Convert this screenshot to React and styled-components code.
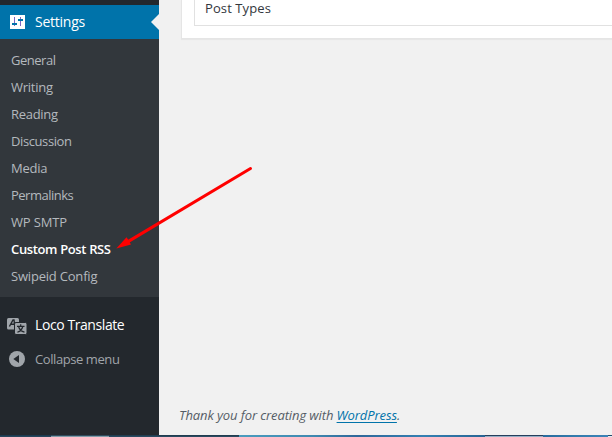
import React from "react";
import styled, { createGlobalStyle } from "styled-components";

const GlobalStyle = createGlobalStyle`
  * { box-sizing: border-box; }
  body { margin: 0; overflow: hidden; font-family: "Open Sans", "Noto Sans", sans-serif; }
`;

const Screen = styled.div`
  position: relative;
  width: 612px;
  height: 437px;
  display: flex;
  flex-direction: column;
  overflow: hidden;
  background: #f1f1f1;
`;

const Admin = styled.div`
  display: flex;
  height: 435px;
`;

const Sidebar = styled.nav`
  width: 159px;
  flex: none;
  padding-top: 5px;
  background: #23282d;
`;

const Label = styled.span`
  letter-spacing: ${(p) => p.$track || 0}px;
  white-space: nowrap;
`;

const MenuItem = styled.div`
  display: flex;
  align-items: center;
  height: 34px;
  color: ${(p) => p.$color || "#fff"};
  background: ${(p) => (p.$current ? "#0073aa" : "transparent")};
  font-size: ${(p) => p.$size || 14}px;
  line-height: 18px;

  &::after {
    content: "";
    display: ${(p) => (p.$current ? "block" : "none")};
    margin-left: auto;
    border: 8px solid transparent;
    border-right-color: #f1f1f1;
    border-left: 0;
  }
`;

const IconSlot = styled.span`
  display: flex;
  width: 35px;
  flex: none;
  height: 20px;
`;

const Submenu = styled.ul`
  margin: 0 0 11px;
  padding: 8px 0 7px 11px;
  height: 258px;
  list-style: none;
  background: #32373c;
`;

const SubItem = styled.li`
  height: 27px;
  font-size: 13px;
  line-height: 27px;
  font-weight: ${(p) => (p.$active ? 600 : 400)};
  color: ${(p) => (p.$active ? "#fff" : "#b4b9be")};
`;

const Content = styled.main`
  flex: 1;
  display: flex;
  flex-direction: column;
  justify-content: space-between;
  min-width: 0;
`;

const Card = styled.section`
  height: 39px;
  margin-left: 22px;
  padding-left: 12px;
  background: #fff;
  border: 1px solid #e5e5e5;
  border-width: 0 0 1px 1px;
  box-shadow: 0 1px 1px rgba(0, 0, 0, 0.04);
`;

const Field = styled.div`
  height: 26px;
  padding-left: 10px;
  border: 1px solid #e1e1e1;
  border-width: 0 0 1px 1px;
  color: #32373c;
  font-size: 13px;
  line-height: 17px;
`;

const Footer = styled.footer`
  padding: 0 0 10px 20px;
  color: #555d66;
  font-size: 13px;
  font-style: italic;
  line-height: 20px;
`;

const Link = styled.a`
  color: #0073aa;
  text-decoration: underline;
  text-underline-offset: 2px;
  text-decoration-thickness: 1px;
`;

const Taskbar = styled.div`
  display: flex;
  height: 2px;
`;

const Segment = styled.div`
  width: ${(p) => p.$w}px;
  background: ${(p) => p.$bg};
`;

const Arrow = styled.svg`
  position: absolute;
  left: 110px;
  top: 160px;
`;

const items = [
  ["General", -0.48],
  ["Writing", -0.25],
  ["Reading", -0.3],
  ["Discussion", -0.4],
  ["Media", -0.25],
  ["Permalinks", -0.5],
  ["WP SMTP", -0.15],
  ["Custom Post RSS", -0.36],
  ["Swipeid Config", -0.2],
];

const segments = [
  [51, "linear-gradient(#1c3a4f 50%, #27465b 50%)"],
  [58, "linear-gradient(#2f4c5d 50%, #829ca8 50%)"],
  [130, "linear-gradient(#213d50 50%, #294a60 50%)"],
  [246, "linear-gradient(90deg, #4a9cbe, #3f89b0 30%, #2e6799 48%, #3480b2 75%, #286594)"],
  [58, "linear-gradient(#263e5c 50%, #94afc5 50%)"],
  [65, "linear-gradient(90deg, #286b9d, #337bac 50%, #3c83b7)"],
  [4, "linear-gradient(#26486a 50%, #e4edf3 50%)"],
];

const SettingsIcon = () => (
  <svg width="35" height="20" shapeRendering="crispEdges">
    <rect x="10" y="3" width="15" height="14" fill="#fff" />
    <path d="M14 5h1v9h-1zM20 5h1v9h-1z" fill="#8067c4" />
    <path d="M12 11h5v2h-5zM18 7h5v2h-5z" fill="#0073aa" />
  </svg>
);

const TranslateIcon = () => (
  <svg width="35" height="20" fill="none">
    <rect x="7" y="3" width="12" height="11.5" rx="1.5" fill="#a0a5aa" />
    <path d="M9.4 11.5 13 5h1l.8 6.5M11 9.2h3.4" stroke="#23282d" strokeWidth="1.4" />
    <rect x="14.5" y="7.5" width="12.5" height="12" rx="1.5" fill="#a0a5aa" stroke="#23282d" />
    <path d="M17 11.3h7.5M20.7 9.3v2M22.8 11.5c-.7 2.8-2.4 4.7-5.4 5.7M18.5 11.5c.8 2.7 2.8 4.8 6 5.7" stroke="#23282d" strokeWidth="1.2" />
  </svg>
);

const CollapseIcon = () => (
  <svg width="35" height="20">
    <circle cx="17" cy="10" r="8" fill="#a0a5aa" />
    <path d="M13.3 10 19 6v8z" fill="#23282d" />
  </svg>
);

export default function App() {
  return (
    <>
      <GlobalStyle />
      <Screen>
        <Admin>
          <Sidebar>
            <MenuItem $current>
              <IconSlot><SettingsIcon /></IconSlot>
              <Label $track={-0.25}>Settings</Label>
            </MenuItem>
            <Submenu>
              {items.map(([name, track]) => (
                <SubItem key={name} $active={name === "Custom Post RSS"}>
                  <Label $track={track}>{name}</Label>
                </SubItem>
              ))}
            </Submenu>
            <MenuItem>
              <IconSlot><TranslateIcon /></IconSlot>
              <Label $track={-0.42}>Loco Translate</Label>
            </MenuItem>
            <MenuItem $color="#a0a5aa" $size={13}>
              <IconSlot><CollapseIcon /></IconSlot>
              <Label $track={-0.42}>Collapse menu</Label>
            </MenuItem>
          </Sidebar>
          <Content>
            <Card>
              <Field><Label $track={0.1}>Post Types</Label></Field>
            </Card>
            <Footer>
              <Label $track={-0.1}>Thank you for creating with <Link>WordPress</Link>.</Label>
            </Footer>
          </Content>
        </Admin>
        <Taskbar>
          {segments.map(([w, bg], i) => <Segment key={i} $w={w} $bg={bg} />)}
        </Taskbar>
        <Arrow width="150" height="100">
          <path d="M140.5 8.5 18 81.6" stroke="#f00" strokeWidth="3" strokeLinecap="round" />
          <path d="M6.3 88.5 16.5 77.2l2.5 3.8 2 3.6z" fill="#f00" />
        </Arrow>
      </Screen>
    </>
  );
}
